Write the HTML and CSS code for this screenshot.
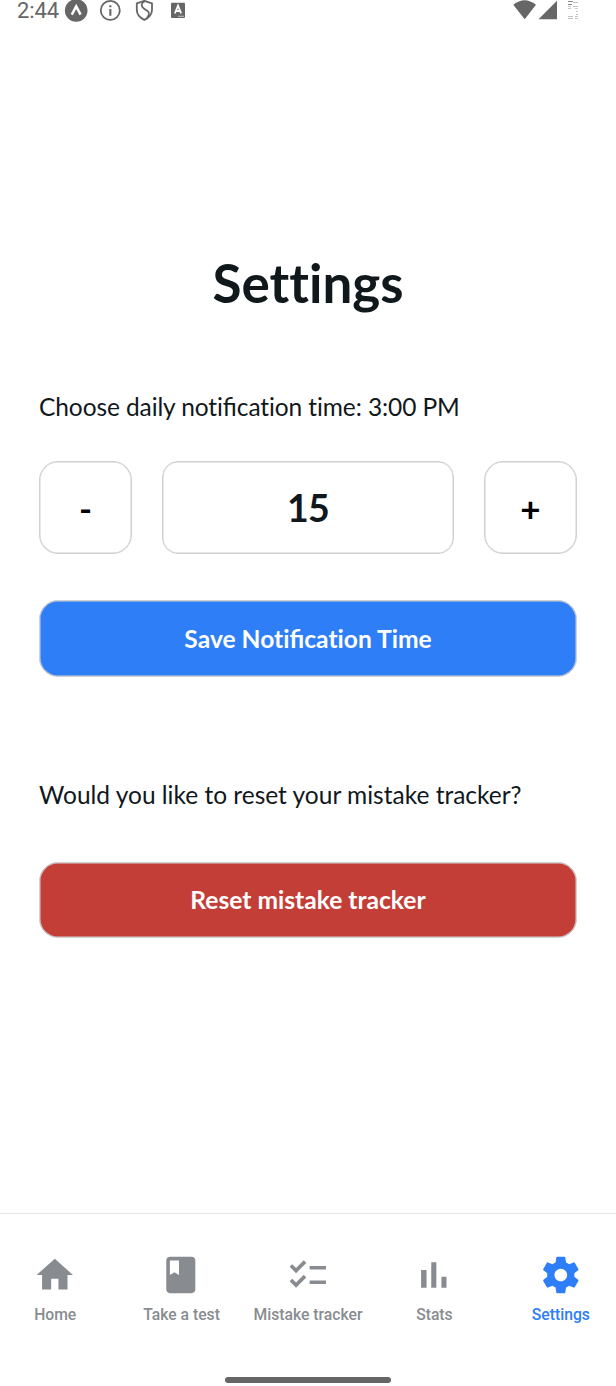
FILE: index.html
```html
<!DOCTYPE html>
<html lang="en">
<head>
<meta charset="utf-8">
<title>Settings</title>
<link rel="stylesheet" href="styles.css">
</head>
<body>
<div class="screen">
  <header class="status">
    <span class="clock">2:44</span>
    <svg class="status-left" viewBox="62 0 126 24">
      <circle cx="76.2" cy="10.500" r="11.300" fill="#666"/>
      <path d="M71.800 14.600 76.200 6.400l4.400 8.200" fill="none" stroke="#fff" stroke-width="2.500"/>
      <circle cx="110.300" cy="10.400" r="9.500" fill="none" stroke="#666" stroke-width="1.800"/>
      <path d="M109.300 5.200h2.100v2.100h-2.100zM109.300 9h2.100v6.800h-2.100z" fill="#666"/>
      <path d="M144.400.8l7.600 2.700v6.200c0 4.500-3 8-7.600 10.200-4.600-2.200-7.600-5.700-7.600-10.200V3.500z" fill="none" stroke="#666" stroke-width="1.800"/>
      <path d="M144.600 1.200c-3.500 2-4 5-.8 7.200l3.700 2.500c2.300 1.700 1.700 4.700-.6 6.900" fill="none" stroke="#666" stroke-width="1.800"/>
      <rect x="171" y="2.700" width="14" height="15.300" rx="1" fill="#666"/>
      <path d="M174.900 13.400l3.100-7.700 3.100 7.700M176 11h4" fill="none" stroke="#fff" stroke-width="1.800"/>
      <path d="M178.500 16.300h1.200m.8 0h1.200m.8 0h1.200" stroke="#fff" stroke-width="1"/>
    </svg>
    <svg class="status-right" viewBox="512 0 68 24">
      <path d="M513.300 4.800Q524.500-4.200 536 4.800L524.700 19.200z" fill="#666"/>
      <path d="M557 .7V19.200H538.500z" fill="#666"/>
      <path d="M568 1.500h5M568 4.500h4" stroke="#888" stroke-width="1"/>
      <path d="M573 2.500h5M568 6.500h3m2 0h5M568 8.500h3m4 0h2.500M576 11.500h2m-2 3h2M568 16.500h5m2 0h3M568 18.500h5m2 0h3" stroke="#c4c4c4" stroke-width="1"/>
    </svg>
  </header>
  <main class="content">
    <h1 class="title">Settings</h1>
    <p class="label time-label">Choose daily noti<span class="lig">fi</span>cation time: 3:00 PM</p>
    <div class="stepper">
      <button class="step">-</button>
      <div class="value">15</div>
      <button class="step">+</button>
    </div>
    <button class="action save">Save Noti<span class="lig">fi</span>cation Time</button>
    <p class="label reset-label">Would you like to reset your mistake tracker?</p>
    <button class="action reset">Reset mistake tracker</button>
  </main>
  <nav class="tabs">
    <a class="tab"><svg class="icon" viewBox="0 0 24 24"><path d="M10 20v-6h4v6h5v-8h3L12 3 2 12h3v8z"/></svg><span>Home</span></a>
    <a class="tab"><svg class="icon" viewBox="0 0 24 24"><path d="M18 2H6c-1.100 0-2 .9-2 2v16c0 1.100.9 2 2 2h12c1.100 0 2-.9 2-2V4c0-1.100-.9-2-2-2zM6 4h5v8l-2.500-1.500L6 12V4z"/></svg><span>Take a test</span></a>
    <a class="tab"><svg class="icon" viewBox="0 0 24 24"><path d="M22 7h-9v2h9V7zm0 8h-9v2h9v-2zM5.540 11L2 7.460l1.410-1.410 2.120 2.120 4.240-4.240 1.410 1.410L5.540 11zm0 8L2 15.460l1.410-1.410 2.120 2.120 4.240-4.240 1.410 1.410L5.540 19z"/></svg><span>Mistake tracker</span></a>
    <a class="tab"><svg class="icon" viewBox="0 0 24 24"><path d="M5 9.200h3V19H5zM10.600 5h2.800v14h-2.800zm5.600 8H19v6h-2.800z"/></svg><span>Stats</span></a>
    <a class="tab active"><svg class="icon" viewBox="0 0 24 24"><path d="M19.430 12.980c.04-.32.07-.64.07-.98s-.03-.66-.07-.98l2.110-1.650c.19-.15.24-.42.12-.64l-2-3.460c-.12-.22-.39-.3-.61-.22l-2.490 1c-.52-.4-1.080-.73-1.690-.98l-.38-2.650C14.460 2.180 14.250 2 14 2h-4c-.25 0-.46.18-.49.42l-.38 2.650c-.61.25-1.170.59-1.690.98l-2.490-1c-.23-.09-.49 0-.61.22l-2 3.460c-.13.22-.07.49.12.64l2.110 1.650c-.04.32-.07.65-.07.98s.03.66.07.98l-2.110 1.650c-.19.15-.24.42-.12.64l2 3.460c.12.22.39.3.61.22l2.490-1c.52.4 1.080.73 1.690.98l.38 2.650c.03.24.24.42.49.42h4c.25 0 .46-.18.49-.42l.38-2.650c.61-.25 1.170-.59 1.690-.98l2.490 1c.23.09.49 0 .61-.22l2-3.460c.12-.22.07-.49-.12-.64l-2.110-1.650zM12 15.500c-1.930 0-3.500-1.570-3.500-3.500s1.570-3.500 3.500-3.500 3.500 1.570 3.500 3.500-1.570 3.500-3.500 3.500z"/></svg><span>Settings</span></a>
  </nav>
  <div class="gesture"></div>
</div>
</body>
</html>
```
FILE: styles.css
```css
* { box-sizing: border-box; }
body { margin: 0; background: #fff; }
.screen {
  width: 616px;
  height: 1386px;
  overflow: hidden;
  display: flex;
  flex-direction: column;
  font-family: Lato, sans-serif;
  font-variant-ligatures: none;
  color: #11181c;
}
.lig { font-variant-ligatures: normal; letter-spacing: 0; }
.status {
  height: 24px;
  flex: none;
  display: flex;
  padding: 0 36px 0 17px;
}
.clock {
  width: 45px;
  font: 400 22px/22px Roboto, sans-serif;
  letter-spacing: -0.1px;
  color: #666;
  white-space: nowrap;
}
.status-left { width: 126px; height: 24px; }
.status-right { width: 68px; height: 24px; margin-left: auto; }
.content {
  flex: 1;
  display: flex;
  flex-direction: column;
  padding: 227px 39px 0;
}
.title {
  margin: 0 0 76px;
  font-size: 53px;
  line-height: 64px;
  font-weight: 700;
  text-align: center;
}
.label { margin: 0; font-size: 24.5px; line-height: 31px; white-space: nowrap; }
.time-label { letter-spacing: -0.1px; }
.stepper {
  display: flex;
  gap: 30px;
  margin: 39px 0 46px;
}
.step, .value, .action {
  border: 1px solid #d0d0d0;
  box-shadow: inset 0 0 0 0.5px #d0d0d0;
}
.step, .value {
  height: 93px;
  background: #fff;
  display: flex;
  align-items: center;
  justify-content: center;
  padding: 0;
}
.step {
  width: 93px;
  border-radius: 19px;
  font: 700 35px/42px Lato, sans-serif;
  color: #000;
}
.value {
  flex: 1;
  border-radius: 16px;
  font-size: 37.5px;
  letter-spacing: -0.8px;
  font-weight: 700;
}
.action {
  height: 77px;
  border-radius: 19px;
  padding: 0;
  color: #fff;
  font: 700 24.6px/30px Lato, sans-serif;
  font-variant-ligatures: none;
}
.save { background: #2e7ef7; }
.reset { background: #c43e38; height: 76px; }
.reset-label { margin: 102px 0 52px; }
.tabs {
  flex: none;
  height: 173px;
  margin: 0 -8px;
  padding-top: 39px;
  border-top: 1px solid #e5e5e5;
  display: flex;
}
.tab {
  flex: 1 1 0;
  display: flex;
  flex-direction: column;
  align-items: center;
  font: 500 15.700px/20px Roboto, sans-serif;
  color: #888c90;
  white-space: nowrap;
}
.icon { width: 43.6px; height: 44px; margin: 0 1px 8px 0; fill: currentColor; }
.active { color: #2e7ef7; }
.gesture {
  position: absolute;
  left: 225px;
  top: 1377px;
  width: 166px;
  height: 6px;
  border-radius: 3px;
  background: #666;
}
```
